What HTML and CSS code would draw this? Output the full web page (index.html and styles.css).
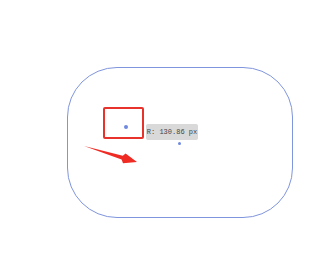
FILE: index.html
```html
<!DOCTYPE html>
<html lang="en">
<head>
    <meta charset="UTF-8">
    <meta name="viewport" content="width=device-width, initial-scale=1.0">
    <title>Corner Radius</title>
    <link rel="stylesheet" href="styles.css">
</head>
<body>
    <div class="shape">
        <div class="select-box"></div>
        <span class="dot dot-handle"></span>
        <div class="tip">R: 130.86 px</div>
        <span class="dot dot-center"></span>
        <svg class="arrow" width="56" height="22" viewBox="0 0 56 22">
            <polygon points="0,1 38.8,10.8 41.6,8.6 53,17 39,18.2 37.6,14.6" fill="#ef2b24"/>
        </svg>
    </div>
</body>
</html>
```
FILE: styles.css
```css
body {
    margin: 0;
    background-color: #fff;
    font-family: "Liberation Mono", monospace;
}
.shape {
    position: relative;
    box-sizing: border-box;
    width: 226px;
    height: 151px;
    margin: 67px 0 0 67px;
    border: 1px solid #7f95dd;
    border-radius: 50px;
}
.select-box {
    position: absolute;
    left: 35px;
    top: 39px;
    width: 41px;
    height: 32px;
    box-sizing: border-box;
    border: 2px solid #e8332c;
    border-radius: 2px;
}
.dot {
    position: absolute;
    border-radius: 50%;
    background-color: #7088e0;
}
.dot-handle {
    left: 56px;
    top: 57px;
    width: 4px;
    height: 4px;
}
.dot-center {
    left: 110px;
    top: 74px;
    width: 3px;
    height: 3px;
}
.tip {
    position: absolute;
    left: 78px;
    top: 56px;
    width: 52px;
    height: 16px;
    line-height: 16px;
    text-align: center;
    background-color: #d9d9d9;
    border-radius: 2px;
    color: #444;
    font-size: 7px;
}
.arrow {
    position: absolute;
    left: 16px;
    top: 77px;
}
```
